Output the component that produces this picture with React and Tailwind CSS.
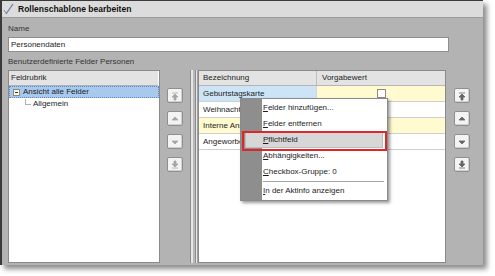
import React from "react";

const font = { fontFamily: '"Liberation Sans", Arial, sans-serif' };

// small arrow glyphs for the move buttons
function ArrowIcon({ kind, color }) {
    const paths = {
        top: "M1 2h6 M4 3L1 6h6z M3 6h2v3h-2z",
        up: "M4 3L1 6h6z",
        down: "M4 7L1 4h6z",
        bottom: "M3 1h2v3h-2z M4 7L1 4h6z M1 8h6",
    };
    return (
        <svg width="8" height="10" viewBox="0 0 8 10" fill={color} stroke={color} strokeWidth="0.8">
            <path d={paths[kind]} />
        </svg>
    );
}

function MoveButton({ kind, dim }) {
    return (
        <div className="w-[16px] h-[15px] flex items-center justify-center bg-[#f3f3f3] border border-[#8f8f8f] rounded-[2px] shadow-[inset_-1px_-1px_0_#d0d0d0]">
            <ArrowIcon kind={kind} color={dim ? "#a6a6a6" : "#666666"} />
        </div>
    );
}

const rows = [
    { name: "Geburtstagskarte", c1: "bg-[#cde4f7]", c2: "bg-[#fffad0]", check: true },
    { name: "Weihnachtskarte", c1: "bg-white", c2: "bg-white" },
    { name: "Interne Ansprechpartner", c1: "bg-[#fffad0]", c2: "bg-[#fffad0]" },
    { name: "Angeworben von", c1: "bg-white", c2: "bg-white" },
];

const menuItems = [
    { label: "Felder hinzufügen..." },
    { label: "Felder entfernen" },
    { label: "Pflichtfeld", active: true },
    { label: "Abhängigkeiten..." },
    { label: "Checkbox-Gruppe: 0" },
    { sep: true },
    { label: "In der Aktinfo anzeigen" },
];

export default function App() {
    return (
        <div className="relative w-[495px] h-[276px] bg-white overflow-hidden text-[8px] text-[#1c1c1c]" style={font}>
            <div className="w-[483px] h-[265px] flex flex-col bg-[#b3b3b3] border-l-2 border-t border-[#3a3a3a] shadow-[4px_4px_5px_rgba(0,0,0,0.45)]">
                {/* Title bar */}
                <div className="h-[17px] flex items-center bg-[#dcdcdc] border-b border-[#9c9c9c]">
                    <svg width="12" height="12" viewBox="0 0 12 12" className="ml-[1px]">
                        <path d="M10 1L3 11" stroke="#6b7fa6" strokeWidth="1.3" />
                        <path d="M1 7l2 3" stroke="#8a8a8a" strokeWidth="1" />
                    </svg>
                    <span className="ml-[3px] text-[8.5px] font-bold text-[#111]">Rollenschablone bearbeiten</span>
                </div>

                {/* Body */}
                <div className="flex-1 flex flex-col pl-[6px] pb-[2px]">
                    <div className="mt-[6px] h-[10px] leading-[10px] text-[#333]">Name</div>
                    <div className="mt-[3px] w-[441px] h-[15px] flex items-center bg-white border border-[#8e8e8e] pl-[2px]">
                        Personendaten
                    </div>
                    <div className="mt-[5px] h-[10px] leading-[10px] text-[#333]">Benutzerdefinierte Felder Personen</div>

                    <div className="mt-[3px] flex-1 flex">
                        {/* Left tree panel */}
                        <div className="w-[152px] bg-white border border-[#8a8a8a] flex flex-col">
                            <div className="h-[15px] flex items-center bg-[#e3e3e3] border-b border-[#a9b4c2] pl-[2px] mr-[1px]">
                                Feldrubrik
                            </div>
                            <div className="h-[12px] flex items-center bg-[#a8c9ee] border border-dotted border-[#6b86b0] pl-[3px]">
                                <div className="w-[7px] h-[7px] border border-[#8a8a8a] bg-[#fff8d8] flex items-center justify-center">
                                    <div className="w-[3px] h-px bg-[#333]" />
                                </div>
                                <span className="ml-[3px]">Ansicht alle Felder</span>
                            </div>
                            <div className="h-[12px] flex items-center pl-[16px]">
                                <div className="w-[6px] h-[6px] border-l border-b border-[#b0b0b0] -mt-[5px]" />
                                <span className="ml-[2px]">Allgemein</span>
                            </div>
                        </div>

                        {/* Left move buttons */}
                        <div className="w-[30px] flex flex-col gap-[8px] pt-[18px] pl-[7px]">
                            <MoveButton kind="top" dim />
                            <MoveButton kind="up" dim />
                            <MoveButton kind="down" dim />
                            <MoveButton kind="bottom" dim />
                        </div>

                        {/* Splitter */}
                        <div className="w-[8px] flex">
                            <div className="w-px bg-[#8c8c8c]" />
                            <div className="w-[2px] bg-[#e6e6e6]" />
                            <div className="w-[2px] bg-[#b8b8b8]" />
                            <div className="w-px bg-[#8c8c8c]" />
                            <div className="w-px bg-[#e6e6e6]" />
                            <div className="w-px bg-[#a0a0a0]" />
                        </div>

                        {/* Right grid panel */}
                        <div className="w-[248px] bg-white border border-[#8a8a8a] flex flex-col">
                            <div className="h-[15px] flex bg-[#e3e3e3] border-b border-[#b5b5b5]">
                                <div className="w-[118px] flex items-center pl-[4px] border-r border-[#bdbdbd]">Bezeichnung</div>
                                <div className="flex-1 flex items-center pl-[5px]">Vorgabewert</div>
                            </div>
                            {rows.map((row) => (
                                <div key={row.name} className="h-[16px] flex border-b border-[#cfcfcf]">
                                    <div className={`w-[118px] flex items-center pl-[4px] border-r border-[#d6d6d6] whitespace-nowrap overflow-hidden ${row.c1}`}>
                                        {row.name}
                                    </div>
                                    <div className={`flex-1 flex items-center pl-[60px] ${row.c2}`}>
                                        {row.check && <div className="w-[9px] h-[9px] bg-white border border-[#8a8a8a]" />}
                                    </div>
                                </div>
                            ))}
                        </div>

                        {/* Right move buttons */}
                        <div className="flex-1 flex flex-col gap-[8px] pt-[18px] pl-[8px]">
                            <MoveButton kind="top" />
                            <MoveButton kind="up" />
                            <MoveButton kind="down" />
                            <MoveButton kind="bottom" />
                        </div>
                    </div>
                </div>
            </div>

            {/* Context menu */}
            <div className="absolute left-[240px] top-[98px] w-[148px] flex flex-col py-[1px] bg-[linear-gradient(to_right,#8e8e8e_21px,#ffffff_21px)] border border-[#8a8a8a] shadow-[2px_2px_3px_rgba(0,0,0,0.4)]">
                {menuItems.map((item, i) =>
                    item.sep ? (
                        <div key={i} className="h-[3px] flex items-center pl-[22px] pr-[3px]">
                            <div className="flex-1 h-px bg-[#a3a3a3]" />
                        </div>
                    ) : (
                        <div
                            key={i}
                            className={
                                item.active
                                    ? "h-[16px] mx-[4px] flex items-center pl-[17px] bg-[#d7d7d7] border border-[#bcbcbc]"
                                    : "h-[16px] flex items-center pl-[22px]"
                            }
                        >
                            <span className="inline-block first-letter:underline">{item.label}</span>
                        </div>
                    )
                )}
                {/* red annotation frame */}
                <div className="absolute left-[1px] top-[32px] w-[145px] h-[20px] border-2 border-[#e0262a]" />
            </div>
        </div>
    );
}
